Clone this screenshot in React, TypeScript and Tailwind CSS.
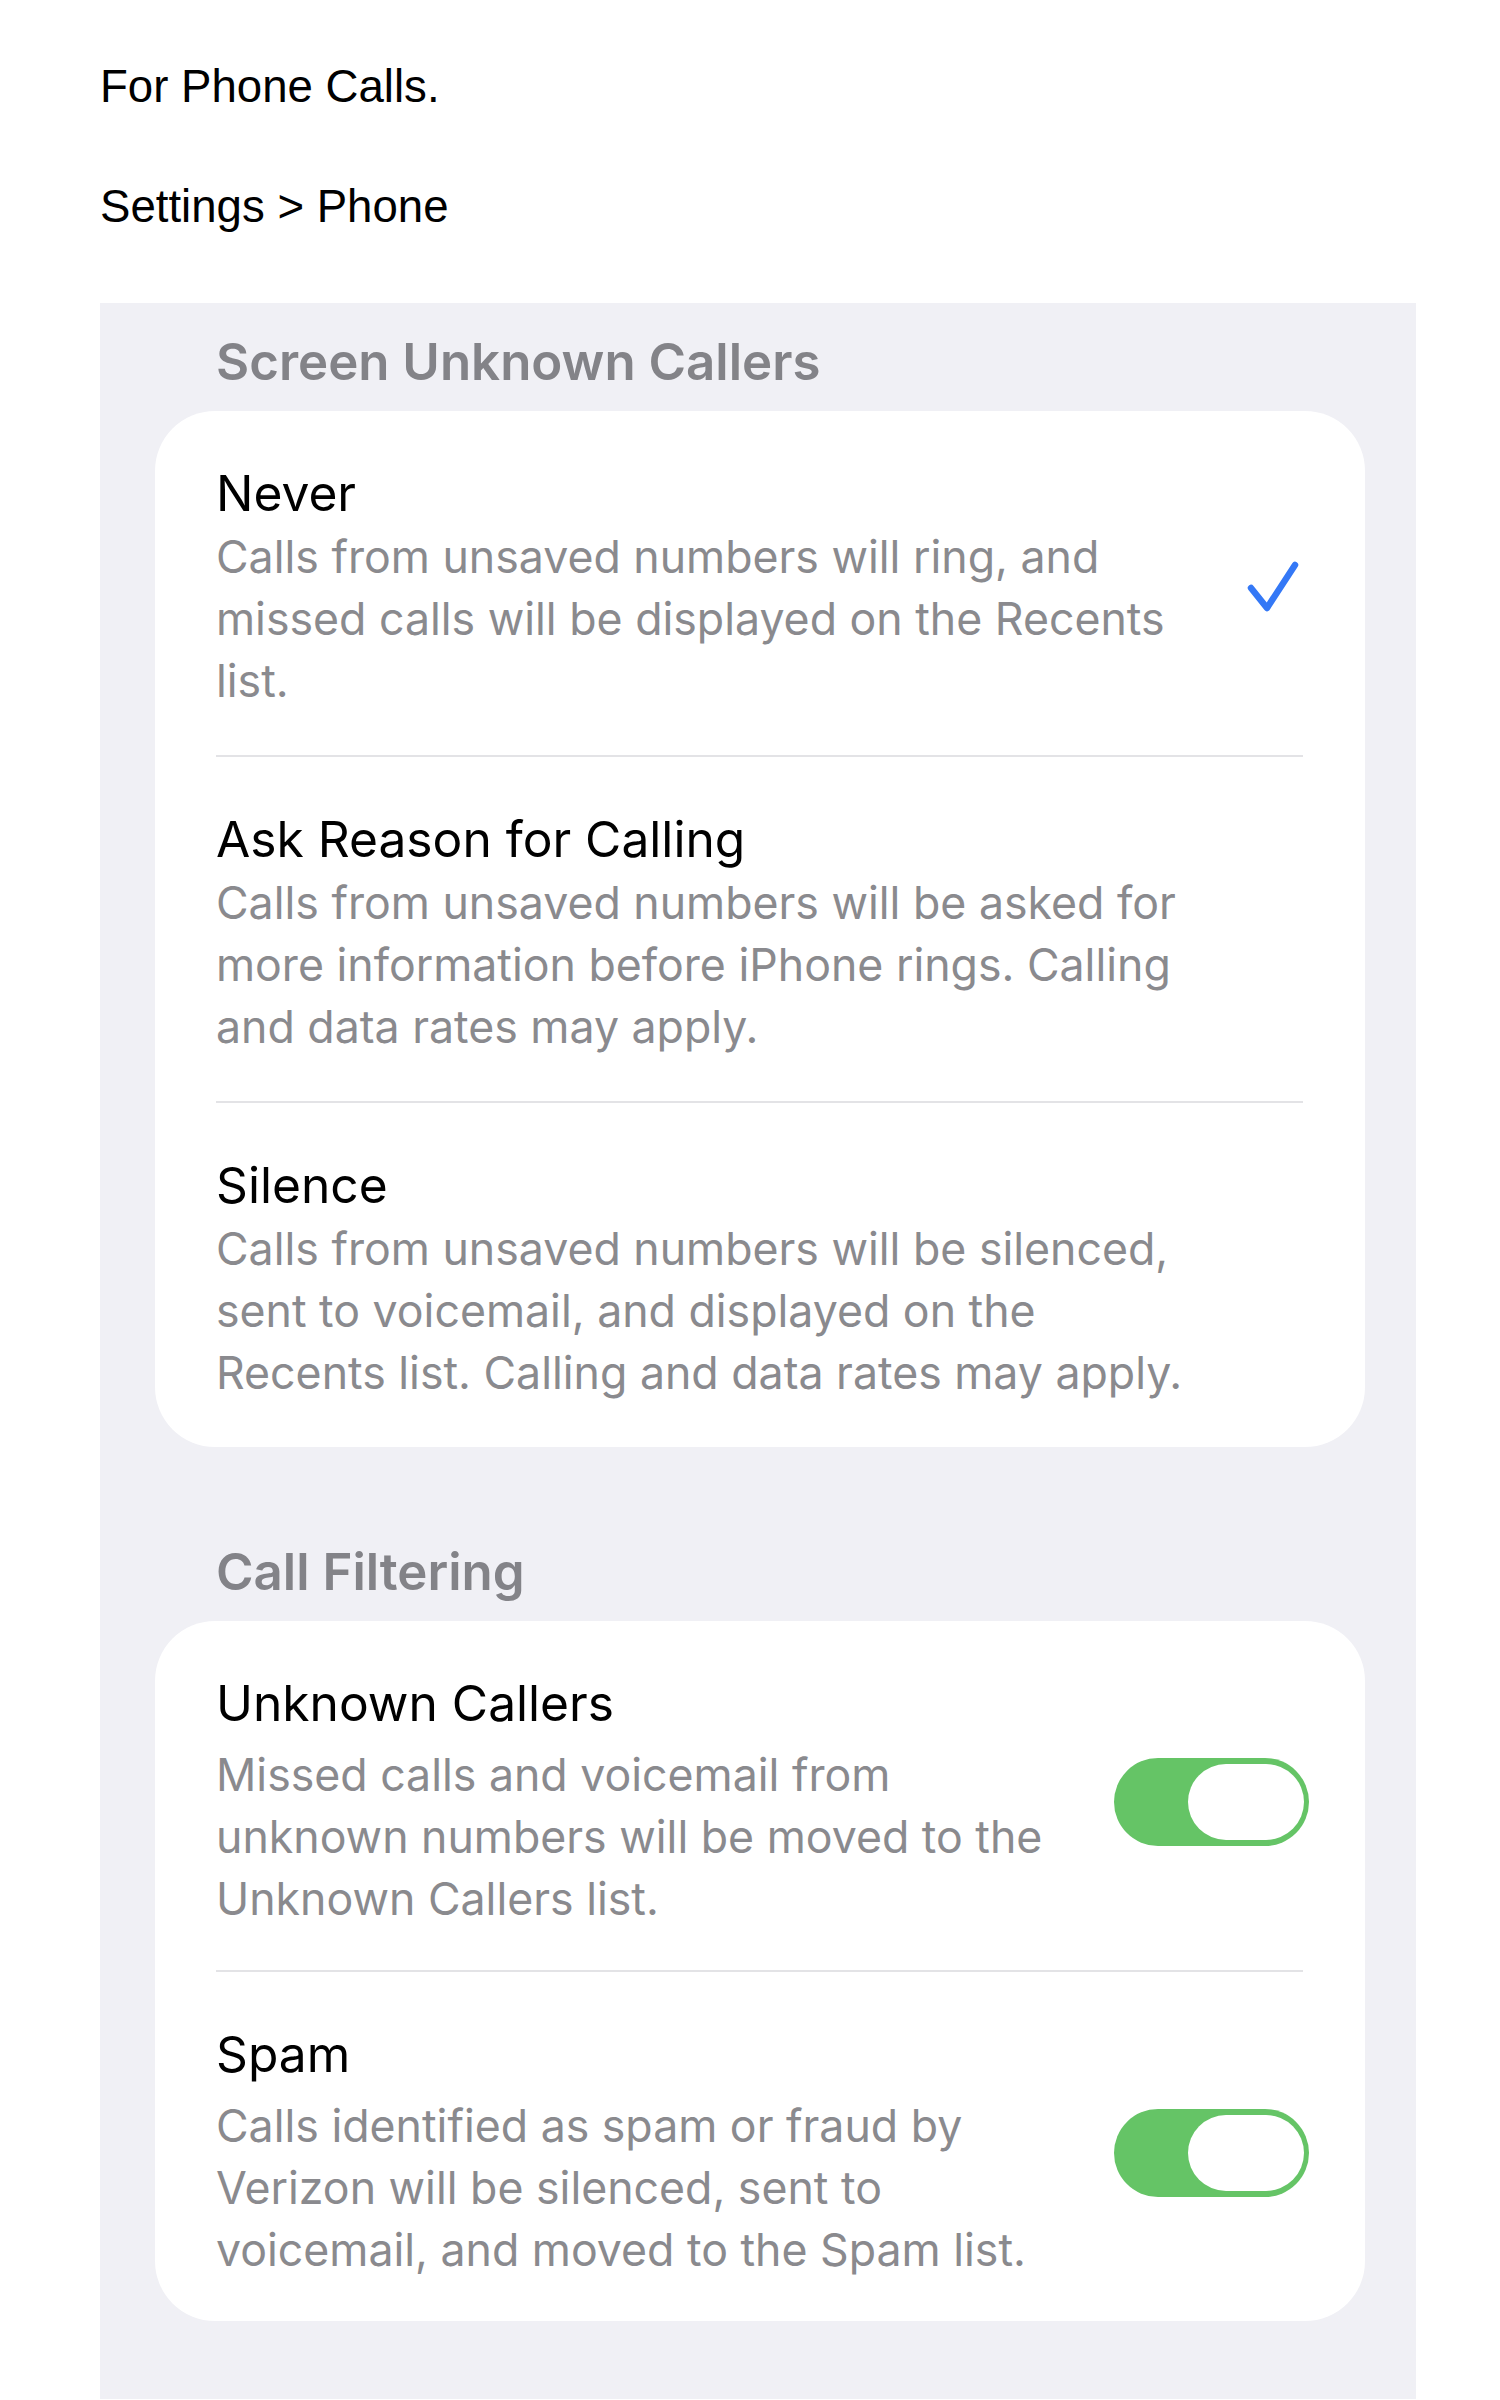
import React from 'react';

/**
 * Phone settings walkthrough
 *
 * A short note followed by the iOS "Settings > Phone" screen
 * for screening and filtering unknown callers.
 */

type ScreeningOption = {
  title: string;
  description: string;
  selected?: boolean;
};

type FilterOption = {
  title: string;
  description: string;
  enabled: boolean;
};

const screeningOptions: ScreeningOption[] = [
  {
    title: 'Never',
    description:
      'Calls from unsaved numbers will ring, and missed calls will be displayed on the Recents list.',
    selected: true,
  },
  {
    title: 'Ask Reason for Calling',
    description:
      'Calls from unsaved numbers will be asked for more information before iPhone rings. Calling and data rates may apply.',
  },
  {
    title: 'Silence',
    description:
      'Calls from unsaved numbers will be silenced, sent to voicemail, and displayed on the Recents list. Calling and data rates may apply.',
  },
];

const filterOptions: FilterOption[] = [
  {
    title: 'Unknown Callers',
    description:
      'Missed calls and voicemail from unknown numbers will be moved to the Unknown Callers list.',
    enabled: true,
  },
  {
    title: 'Spam',
    description:
      'Calls identified as spam or fraud by Verizon will be silenced, sent to voicemail, and moved to the Spam list.',
    enabled: true,
  },
];

function SectionHeader({ children }: { children: React.ReactNode }) {
  return (
    <div className="mb-[21px] pl-[116px] text-[51px] leading-[56px] font-semibold text-[#838388]">
      {children}
    </div>
  );
}

function Separator() {
  return <div className="ml-[61px] mr-[62px] h-[2px] bg-[#e3e3e6]" />;
}

function Checkmark() {
  return (
    <svg width="54" height="51" viewBox="0 0 54 51" fill="none" className="mr-[9px]">
      <path
        d="M5 27L21 47L49 4"
        stroke="#3478f6"
        strokeWidth={6.5}
        strokeLinecap="round"
        strokeLinejoin="round"
      />
    </svg>
  );
}

function Toggle({ on }: { on: boolean }) {
  return (
    <div
      className={
        on
          ? 'mt-[4px] flex h-[88px] w-[195px] items-center justify-end rounded-full bg-[#65c466] pr-[5px]'
          : 'mt-[4px] flex h-[88px] w-[195px] items-center justify-start rounded-full bg-[#e9e9eb] pl-[5px]'
      }
    >
      <div className="h-[76px] w-[116px] rounded-full bg-white" />
    </div>
  );
}

function Row({
  title,
  description,
  control,
  toggleRow = false,
}: {
  title: string;
  description: string;
  control?: React.ReactNode;
  toggleRow?: boolean;
}) {
  return (
    <div
      className={
        toggleRow
          ? 'flex items-center pt-[49px] pb-[40px] pl-[61px] pr-[56px]'
          : 'flex items-center pt-[49px] pb-[43px] pl-[61px] pr-[56px]'
      }
    >
      <div className={toggleRow ? 'w-[840px]' : 'w-[990px]'}>
        <div className="text-[49.7px] leading-[66px] text-black">{title}</div>
        <div
          className={
            toggleRow
              ? 'mt-[8px] text-[44.65px] leading-[62px] text-[#8a8a8e]'
              : 'text-[44.65px] leading-[62px] text-[#8a8a8e]'
          }
        >
          {description}
        </div>
      </div>
      <div className="ml-auto flex items-center">{control}</div>
    </div>
  );
}

export default function App() {
  return (
    <div className="min-h-[2400px] bg-white pl-[100px] pt-[61px]">
      <p className="font-['Liberation_Sans',Arial,sans-serif] text-[45.6px] leading-[52px] text-black">
        For Phone Calls.
      </p>
      <p className="mt-[68px] font-['Liberation_Sans',Arial,sans-serif] text-[45.6px] leading-[52px] text-black">
        Settings &gt; Phone
      </p>

      <div className="mt-[70px] w-[1316px] bg-[#f0f0f5] pt-[31px] pb-[78px] font-['Inter','Noto_Sans',sans-serif]">
        <SectionHeader>Screen Unknown Callers</SectionHeader>
        <div className="ml-[55px] w-[1210px] rounded-[60px] bg-white">
          {screeningOptions.map((option, i) => (
            <React.Fragment key={option.title}>
              {i > 0 && <Separator />}
              <Row
                title={option.title}
                description={option.description}
                control={option.selected ? <Checkmark /> : null}
              />
            </React.Fragment>
          ))}
        </div>

        <div className="mt-[97px]">
          <SectionHeader>Call Filtering</SectionHeader>
        </div>
        <div className="ml-[55px] w-[1210px] rounded-[60px] bg-white">
          {filterOptions.map((option, i) => (
            <React.Fragment key={option.title}>
              {i > 0 && <Separator />}
              <Row
                title={option.title}
                description={option.description}
                control={<Toggle on={option.enabled} />}
                toggleRow
              />
            </React.Fragment>
          ))}
        </div>
      </div>
    </div>
  );
}
